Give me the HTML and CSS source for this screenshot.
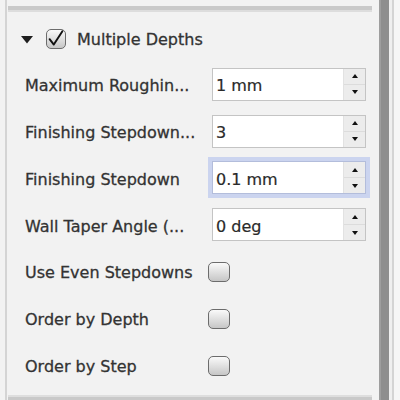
FILE: index.html
```html
<!DOCTYPE html>
<html>
<head>
<meta charset="utf-8">
<link rel="stylesheet" href="styles.css">
</head>
<body>
<div class="app">
  <div class="panel">
    <div class="sep sep-top"></div>
    <div class="group-header">
      <svg class="disclosure" width="12" height="8" viewBox="0 0 12 8"><polygon points="0,0 12,0 6,7.5" fill="#1e1e1e"/></svg>
      <span class="cb cb-head"><svg width="20" height="20" viewBox="0 0 20 20"><path d="M3.6 11.2 L7.8 16.6 L16.4 3.2" fill="none" stroke="#111" stroke-width="1.9" stroke-linecap="round" stroke-linejoin="round"/></svg></span>
      <span class="group-title">Multiple Depths</span>
    </div>
    <div class="rows">
      <div class="row">
        <span class="label">Maximum Roughin...</span>
        <div class="spin"><span class="val">1 mm</span><span class="arrows"><span class="up"><i class="tri-up"></i></span><span class="down"><i class="tri-down"></i></span></span></div>
      </div>
      <div class="row">
        <span class="label">Finishing Stepdown...</span>
        <div class="spin"><span class="val">3</span><span class="arrows"><span class="up"><i class="tri-up"></i></span><span class="down"><i class="tri-down"></i></span></span></div>
      </div>
      <div class="row">
        <span class="label">Finishing Stepdown</span>
        <div class="spin focus"><span class="val">0.1 mm</span><span class="arrows"><span class="up"><i class="tri-up"></i></span><span class="down"><i class="tri-down"></i></span></span></div>
      </div>
      <div class="row">
        <span class="label">Wall Taper Angle (...</span>
        <div class="spin"><span class="val">0 deg</span><span class="arrows"><span class="up"><i class="tri-up"></i></span><span class="down"><i class="tri-down"></i></span></span></div>
      </div>
      <div class="row">
        <span class="label">Use Even Stepdowns</span>
        <span class="cb cb-row"></span>
      </div>
      <div class="row">
        <span class="label">Order by Depth</span>
        <span class="cb cb-row"></span>
      </div>
      <div class="row">
        <span class="label">Order by Step</span>
        <span class="cb cb-row"></span>
      </div>
    </div>
    <div class="sep sep-bottom"></div>
  </div>
  <div class="splitter"></div>
  <div class="edge"></div>
</div>
</body>
</html>
```
FILE: styles.css
```css
html, body {
  margin: 0;
  padding: 0;
}
body {
  background: #f2f2f2;
  font-family: "DejaVu Sans", "Noto Sans", sans-serif;
  color: #333333;
  -webkit-text-stroke: 0.3px #333333;
}
.app {
  display: flex;
  height: 400px;
  overflow: hidden;
}
.panel {
  width: 372px;
  margin-left: 5px;
  border-left: 2px solid #d4d4d4;
  display: flex;
  flex-direction: column;
  flex: none;
}
.sep {
  margin: 0 7px 0 1px;
  flex: none;
}
.sep-top {
  margin-top: 6px;
  height: 6px;
  background: linear-gradient(#c9c9c9 0 4px, #dddddd 4px);
}
.sep-bottom {
  margin-top: auto;
  height: 5px;
  background: linear-gradient(#dedede 0 2px, #c9c9c9 2px);
}
.group-header {
  display: flex;
  align-items: center;
  height: 45px;
  margin-top: 4px;
  padding-left: 14px;
  flex: none;
}
.disclosure {
  margin-top: 3px;
  flex: none;
}
.cb-head {
  margin-left: 13px;
  width: 20px;
  height: 20px;
}
.group-title {
  margin-left: 11px;
  font-size: 16px;
  padding-top: 2px;
}
.rows {
  display: flex;
  flex-direction: column;
}
.row {
  height: 46.75px;
  display: flex;
  align-items: center;
  padding-left: 18px;
}
.label {
  width: 187px;
  flex: none;
  font-size: 16px;
  white-space: nowrap;
  overflow: hidden;
  padding-top: 3px;
}
.cb {
  box-sizing: border-box;
  border: 1.5px solid #6c6c6c;
  border-radius: 5px;
  background: linear-gradient(#fafafa, #c6c6c6);
  display: flex;
  flex: none;
}
.cb svg {
  margin: -1.5px;
}
.cb-row {
  width: 22px;
  height: 20px;
  margin-left: -4px;
  margin-top: 2px;
}
.spin {
  width: 154px;
  height: 33px;
  box-sizing: border-box;
  border: 1px solid #c4c4c4;
  background: #fff;
  display: flex;
  flex: none;
}
.spin.focus {
  border-color: #b3bddb;
  box-shadow: 0 0 0 4px #cbd4ef;
}
.val {
  flex: 1;
  display: flex;
  align-items: center;
  padding-left: 3px;
  padding-top: 3px;
  font-size: 16px;
  color: #2a2a2a;
  -webkit-text-stroke: 0.2px #2a2a2a;
}
.arrows {
  width: 21px;
  display: flex;
  flex-direction: column;
  background: #ececec;
  border-left: 1px solid #e2e2e2;
}
.arrows span {
  flex: 1;
  display: flex;
  align-items: center;
  justify-content: center;
}
.arrows .up {
  border-bottom: 1px solid #dcdcdc;
}
.tri-up {
  width: 0;
  height: 0;
  border-left: 3px solid transparent;
  border-right: 3px solid transparent;
  border-bottom: 4px solid #111;
}
.tri-down {
  width: 0;
  height: 0;
  border-left: 3px solid transparent;
  border-right: 3px solid transparent;
  border-top: 4px solid #111;
}
.splitter {
  width: 10px;
  flex: none;
  background: linear-gradient(to right, #9e9e9e 0 2px, #8e8e8e 2px);
}
.edge {
  flex: 1;
  background: linear-gradient(to right, #efefef 0 3px, #d4d4d4 3px 5px, #f6f6f6 5px);
}
```
